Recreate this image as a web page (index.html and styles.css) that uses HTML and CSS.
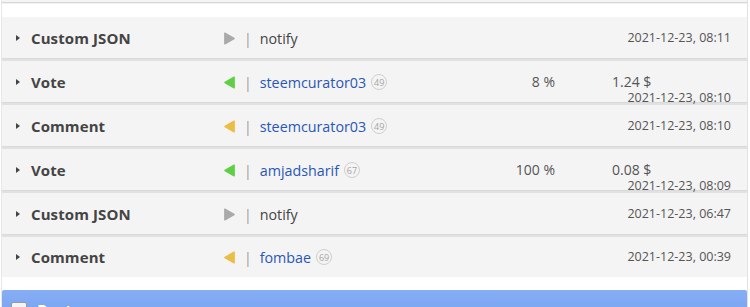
FILE: index.html
```html
<!DOCTYPE html>
<html>
<head>
<meta charset="utf-8">
<link rel="stylesheet" href="styles.css">
</head>
<body>
<div class="page">
  <div class="prev-card"></div>
  <div class="ops">
    <div class="op">
      <span class="caret"></span>
      <span class="label">Custom JSON</span>
      <svg class="dir" viewBox="0 0 12 14"><path d="M2 1.5 L10.5 6.3 Q11.5 7 10.5 7.7 L2 12.5 Q1 13 1 12 L1 2 Q1 1 2 1.5 Z" fill="#a9a9a9"/></svg>
      <span class="pipe">|</span>
      <span class="target plain">notify</span>
      <div class="tail"><span class="date">2021-12-23, 08:11</span></div>
    </div>
    <div class="op">
      <span class="caret"></span>
      <span class="label">Vote</span>
      <svg class="dir" viewBox="0 0 12 14"><path d="M10 1.5 L1.5 6.3 Q0.5 7 1.5 7.7 L10 12.5 Q11 13 11 12 L11 2 Q11 1 10 1.5 Z" fill="#5fcf45"/></svg>
      <span class="pipe">|</span>
      <span class="target"><a class="user">steemcurator03</a><span class="rep">49</span></span>
      <div class="tail"><span class="pct">8 %</span><span class="val">1.24 $</span><span class="date">2021-12-23, 08:10</span></div>
    </div>
    <div class="op">
      <span class="caret"></span>
      <span class="label">Comment</span>
      <svg class="dir" viewBox="0 0 12 14"><path d="M10 1.5 L1.5 6.3 Q0.5 7 1.5 7.7 L10 12.5 Q11 13 11 12 L11 2 Q11 1 10 1.5 Z" fill="#ebbd45"/></svg>
      <span class="pipe">|</span>
      <span class="target"><a class="user">steemcurator03</a><span class="rep">49</span></span>
      <div class="tail"><span class="date">2021-12-23, 08:10</span></div>
    </div>
    <div class="op">
      <span class="caret"></span>
      <span class="label">Vote</span>
      <svg class="dir" viewBox="0 0 12 14"><path d="M10 1.5 L1.5 6.3 Q0.5 7 1.5 7.7 L10 12.5 Q11 13 11 12 L11 2 Q11 1 10 1.5 Z" fill="#5fcf45"/></svg>
      <span class="pipe">|</span>
      <span class="target"><a class="user">amjadsharif</a><span class="rep">67</span></span>
      <div class="tail"><span class="pct">100 %</span><span class="val">0.08 $</span><span class="date">2021-12-23, 08:09</span></div>
    </div>
    <div class="op">
      <span class="caret"></span>
      <span class="label">Custom JSON</span>
      <svg class="dir" viewBox="0 0 12 14"><path d="M2 1.5 L10.5 6.3 Q11.5 7 10.5 7.7 L2 12.5 Q1 13 1 12 L1 2 Q1 1 2 1.5 Z" fill="#a9a9a9"/></svg>
      <span class="pipe">|</span>
      <span class="target plain">notify</span>
      <div class="tail"><span class="date">2021-12-23, 06:47</span></div>
    </div>
    <div class="op">
      <span class="caret"></span>
      <span class="label">Comment</span>
      <svg class="dir" viewBox="0 0 12 14"><path d="M10 1.5 L1.5 6.3 Q0.5 7 1.5 7.7 L10 12.5 Q11 13 11 12 L11 2 Q11 1 10 1.5 Z" fill="#ebbd45"/></svg>
      <span class="pipe">|</span>
      <span class="target"><a class="user">fombae</a><span class="rep">69</span></span>
      <div class="tail"><span class="date">2021-12-23, 00:39</span></div>
    </div>
  </div>
  <div class="posts-bar">
    <span class="check"></span>
    <span class="posts-title">Posts</span>
  </div>
</div>
</body>
</html>
```

FILE: styles.css
```css
html, body {
  margin: 0;
  padding: 0;
  background: #fff;
}
body {
  font-family: "Open Sans", "DejaVu Sans", sans-serif;
  color: #444;
  overflow: hidden;
}
.page {
  margin: 0 2px 0 1px;
  border-left: 1px solid #e8e8e8;
  border-right: 1px solid #e2e2e2;
  min-height: 320px;
}
.prev-card {
  height: 2px;
  background: #f4f4f4;
  border-bottom: 1px solid #d6d6d6;
  box-shadow: 0 1px 1px rgba(0,0,0,0.06);
}
.ops {
  margin-top: 14px;
}
.op {
  display: flex;
  align-items: center;
  height: 42px;
  background: #f4f4f4;
  border-bottom: 2px solid #e1e1e1;
  box-shadow: inset 0 -1px 0 #d9d9d9;
  padding-left: 14px;
  padding-right: 16px;
  font-size: 13px;
}
.op:last-child {
  border-bottom: none;
  box-shadow: none;
  height: 40px;
}
.caret {
  width: 0;
  height: 0;
  border-left: 4px solid #444;
  border-top: 3.5px solid transparent;
  border-bottom: 3.5px solid transparent;
  margin-right: 11px;
}
.label {
  width: 192px;
  font-weight: 700;
  font-size: 15px;
  color: #444;
  letter-spacing: 0.1px;
}
.dir {
  width: 13px;
  height: 15px;
  margin-right: 8px;
}
.pipe {
  color: #999;
  font-size: 14px;
  margin-right: 8px;
}
.target {
  display: flex;
  align-items: center;
  flex: 1;
  font-size: 14.3px;
}
.plain {
  color: #444;
}
.user {
  color: #2a56b8;
}
.rep {
  display: inline-flex;
  align-items: center;
  justify-content: center;
  width: 14px;
  height: 14px;
  border: 1px solid #cfcfcf;
  border-radius: 50%;
  font-size: 9px;
  color: #a5a5a5;
  margin-left: 5px;
}
.tail {
  width: 235px;
  height: 16px;
  display: flex;
  flex-wrap: wrap;
  line-height: 16px;
  color: #555;
  font-size: 14px;
}
.pct {
  width: 59px;
  text-align: right;
}
.val {
  margin-left: 57px;
  width: 60px;
}
.date {
  margin-left: auto;
  line-height: 16px;
  font-size: 12.5px;
}
.posts-bar {
  margin-top: 13px;
  height: 40px;
  border-radius: 2px 2px 0 0;
  background: linear-gradient(#86aef6, #6e99e9);
  display: flex;
  align-items: flex-start;
  padding-top: 10px;
  padding-left: 9px;
}
.check {
  width: 14px;
  height: 14px;
  background: #f4f4f4;
  border: 1px solid #999;
  border-radius: 2px;
  margin-top: 2px;
  margin-right: 10px;
}
.posts-title {
  color: #fff;
  font-weight: 700;
  font-size: 16px;
}
```
